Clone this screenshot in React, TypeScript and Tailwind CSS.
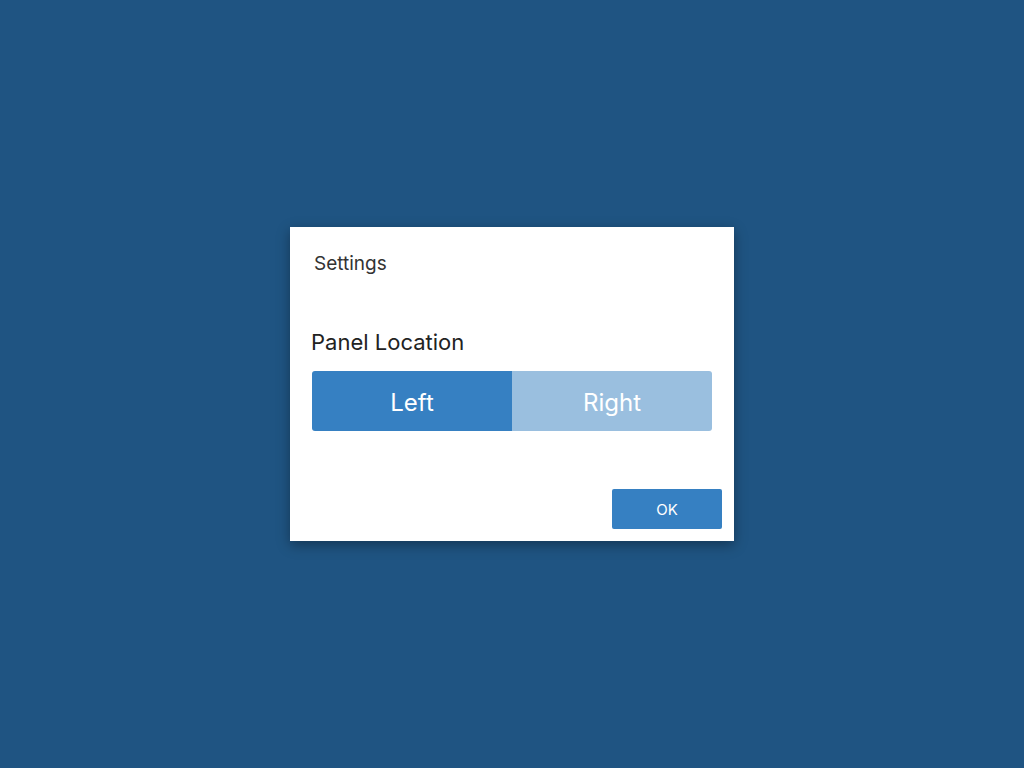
import { useState } from "react";

function App()
{
  const [ side, setSide ] = useState<"left" | "right">("left");

  return (
    <div className="flex h-[768px] w-full items-center justify-center bg-[#1f5482] font-['Inter','Liberation_Sans',sans-serif]">
      <div className="flex h-[314px] w-[444px] flex-col bg-white shadow-[0_4px_12px_rgba(0,0,0,0.35)]">
        <div className="pl-6 pt-[25px] text-[19px] leading-6 text-[#333]">Settings</div>
        <div className="mt-[52px] pl-[21px] text-[22px] leading-7 text-[#222]">Panel Location</div>
        <div className="mt-[15px] flex px-[22px]">
          <button
            type="button"
            onClick={ () => setSide("left") }
            className={ side === "left"
              ? "h-[60px] w-[200px] rounded-l-[3px] bg-[#3680c2] pt-1 text-[24px] text-white"
              : "h-[60px] w-[200px] rounded-l-[3px] bg-[#9abfdf] pt-1 text-[24px] text-white" }
          >
            Left
          </button>
          <button
            type="button"
            onClick={ () => setSide("right") }
            className={ side === "right"
              ? "h-[60px] w-[200px] rounded-r-[3px] bg-[#3680c2] pt-1 text-[24px] text-white"
              : "h-[60px] w-[200px] rounded-r-[3px] bg-[#9abfdf] pt-1 text-[24px] text-white" }
          >
            Right
          </button>
        </div>
        <div className="mt-auto flex justify-end pb-3 pr-3">
          <button type="button" className="h-10 w-[110px] rounded-[2px] bg-[#3680c2] pt-0.5 text-[15px] text-white">
            OK
          </button>
        </div>
      </div>
    </div>
  );
}

export default App;
